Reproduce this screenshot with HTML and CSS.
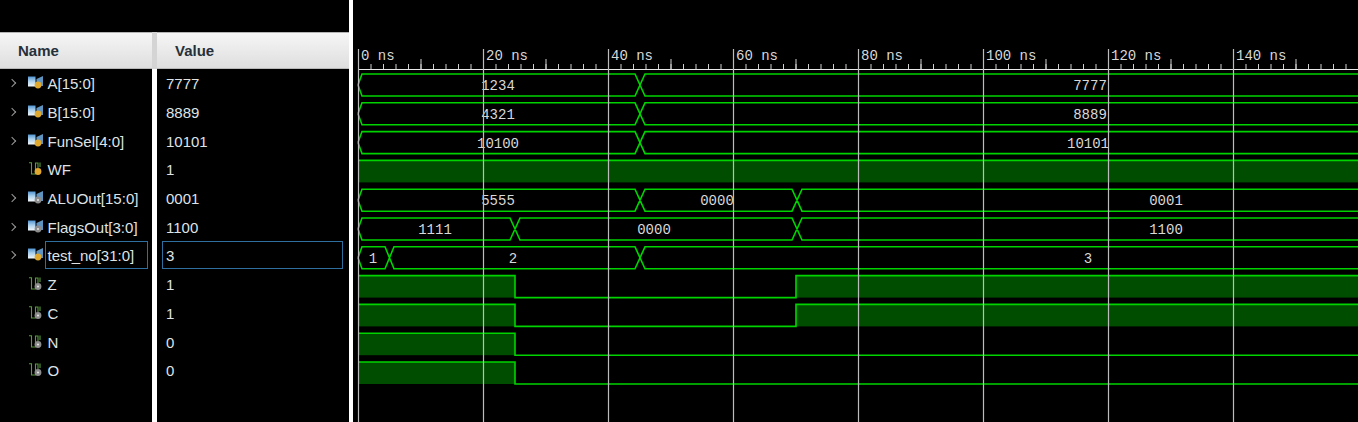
FILE: index.html
```html
<!DOCTYPE html>
<html lang="en">
<head>
  <meta charset="UTF-8">
  <title>Waveform viewer</title>
  <link rel="stylesheet" href="styles.css">
</head>
<body>

  <svg class="defs" width="0" height="0">
    <defs>
      <linearGradient id="bus-left" x1="0" y1="0" x2="0" y2="1">
        <stop offset="0" stop-color="#4f94d0"/>
        <stop offset="0.45" stop-color="#a9cfec"/>
        <stop offset="1" stop-color="#f2f7fb"/>
      </linearGradient>
      <g id="ico-bus">
        <rect x="0" y="0.5" width="7.5" height="10" fill="url(#bus-left)"/>
        <path d="M8.5 3 L15 0 V10 L8.5 10 Z" fill="#5f93c0"/>
      </g>
      <g id="ico-wire">
        <path d="M1 0.8 H3.5 V12 H7.5 V1 H10 V6 M12 0.5 V5" fill="none" stroke="#5a9a40" stroke-width="1.1"/>
      </g>
    </defs>
  </svg>

  <div class="viewer">

    <!-- Name column -->
    <div class="col col-name">
      <div class="col-head">Name</div>
      <div class="row"><span class="chev"></span><svg class="ico" viewBox="0 0 15 14"><use href="#ico-bus"/><circle class="in" cx="10" cy="9" r="3.4"/></svg><span class="cell">A[15:0]</span></div>
      <div class="row"><span class="chev"></span><svg class="ico" viewBox="0 0 15 14"><use href="#ico-bus"/><circle class="in" cx="10" cy="9" r="3.4"/></svg><span class="cell">B[15:0]</span></div>
      <div class="row"><span class="chev"></span><svg class="ico" viewBox="0 0 15 14"><use href="#ico-bus"/><circle class="in" cx="10" cy="9" r="3.4"/></svg><span class="cell">FunSel[4:0]</span></div>
      <div class="row"><span class="chev none"></span><svg class="ico" viewBox="0 0 15 14"><use href="#ico-wire"/><circle class="in" cx="10" cy="9.5" r="3.4"/></svg><span class="cell">WF</span></div>
      <div class="row"><span class="chev"></span><svg class="ico" viewBox="0 0 15 14"><use href="#ico-bus"/><circle class="out" cx="10" cy="9" r="3.4"/><circle class="dot" cx="10" cy="9" r="1"/></svg><span class="cell">ALUOut[15:0]</span></div>
      <div class="row"><span class="chev"></span><svg class="ico" viewBox="0 0 15 14"><use href="#ico-bus"/><circle class="out" cx="10" cy="9" r="3.4"/><circle class="dot" cx="10" cy="9" r="1"/></svg><span class="cell">FlagsOut[3:0]</span></div>
      <div class="row"><span class="chev"></span><svg class="ico" viewBox="0 0 15 14"><use href="#ico-bus"/><circle class="in" cx="10" cy="9" r="3.4"/></svg><span class="cell selected">test_no[31:0]</span></div>
      <div class="row"><span class="chev none"></span><svg class="ico" viewBox="0 0 15 14"><use href="#ico-wire"/><circle class="out" cx="10" cy="9.5" r="3.4"/><circle class="dot" cx="10" cy="9.5" r="1"/></svg><span class="cell">Z</span></div>
      <div class="row"><span class="chev none"></span><svg class="ico" viewBox="0 0 15 14"><use href="#ico-wire"/><circle class="out" cx="10" cy="9.5" r="3.4"/><circle class="dot" cx="10" cy="9.5" r="1"/></svg><span class="cell">C</span></div>
      <div class="row"><span class="chev none"></span><svg class="ico" viewBox="0 0 15 14"><use href="#ico-wire"/><circle class="out" cx="10" cy="9.5" r="3.4"/><circle class="dot" cx="10" cy="9.5" r="1"/></svg><span class="cell">N</span></div>
      <div class="row"><span class="chev none"></span><svg class="ico" viewBox="0 0 15 14"><use href="#ico-wire"/><circle class="out" cx="10" cy="9.5" r="3.4"/><circle class="dot" cx="10" cy="9.5" r="1"/></svg><span class="cell">O</span></div>
    </div>

    <div class="sash sash-inner"><div class="sash-head"></div></div>

    <!-- Value column -->
    <div class="col col-value">
      <div class="col-head">Value</div>
      <div class="row"><span class="cell">7777</span></div>
      <div class="row"><span class="cell">8889</span></div>
      <div class="row"><span class="cell">10101</span></div>
      <div class="row"><span class="cell">1</span></div>
      <div class="row"><span class="cell">0001</span></div>
      <div class="row"><span class="cell">1100</span></div>
      <div class="row"><span class="cell selected">3</span></div>
      <div class="row"><span class="cell">1</span></div>
      <div class="row"><span class="cell">1</span></div>
      <div class="row"><span class="cell">0</span></div>
      <div class="row"><span class="cell">0</span></div>
    </div>

    <div class="sash"></div>

    <!-- Waveform canvas, drawn in page coordinates -->
    <svg class="wave" viewBox="353 0 1005 422">
      <!-- time ruler -->
      <line class="axis" x1="358" y1="69.5" x2="1358" y2="69.5"/>
      <line class="tick-minor" x1="358" y1="66.5" x2="1358" y2="66.5"/>
      <line class="tick-major" x1="420.5" y1="64" x2="1358" y2="64"/>
      <text class="time" x="361" y="60">0 ns</text>
      <text class="time" x="486" y="60">20 ns</text>
      <text class="time" x="611" y="60">40 ns</text>
      <text class="time" x="736" y="60">60 ns</text>
      <text class="time" x="861" y="60">80 ns</text>
      <text class="time" x="986" y="60">100 ns</text>
      <text class="time" x="1111" y="60">120 ns</text>
      <text class="time" x="1236" y="60">140 ns</text>

      <!-- A -->
      <g transform="translate(0 74)">
        <path class="sig" d="M358 11 L362 0 H635 L645 22 H1358 M358 11 L362 22 H635 L645 0 H1358"/>
        <text class="val" x="498" y="16">1234</text>
        <text class="val" x="1090" y="16">7777</text>
      </g>
      <!-- B -->
      <g transform="translate(0 102.8)">
        <path class="sig" d="M358 11 L362 0 H635 L645 22 H1358 M358 11 L362 22 H635 L645 0 H1358"/>
        <text class="val" x="498" y="16">4321</text>
        <text class="val" x="1090" y="16">8889</text>
      </g>
      <!-- FunSel -->
      <g transform="translate(0 131.6)">
        <path class="sig" d="M358 11 L362 0 H635 L645 22 H1358 M358 11 L362 22 H635 L645 0 H1358"/>
        <text class="val" x="498" y="16">10100</text>
        <text class="val" x="1088" y="16">10101</text>
      </g>
      <!-- WF -->
      <g transform="translate(0 160.4)">
        <rect class="high" x="358" y="0" width="1000" height="22"/>
        <path class="sig" d="M358 0 H1358"/>
      </g>
      <!-- ALUOut -->
      <g transform="translate(0 189.2)">
        <path class="sig" d="M358 11 L362 0 H635 L645 22 H792 L802 0 H1358 M358 11 L362 22 H635 L645 0 H792 L802 22 H1358"/>
        <text class="val" x="498" y="16">5555</text>
        <text class="val" x="717" y="16">0000</text>
        <text class="val" x="1166" y="16">0001</text>
      </g>
      <!-- FlagsOut -->
      <g transform="translate(0 218)">
        <path class="sig" d="M358 11 L362 0 H510 L520 22 H792 L802 0 H1358 M358 11 L362 22 H510 L520 0 H792 L802 22 H1358"/>
        <text class="val" x="435" y="16">1111</text>
        <text class="val" x="654" y="16">0000</text>
        <text class="val" x="1166" y="16">1100</text>
      </g>
      <!-- test_no -->
      <g transform="translate(0 246.8)">
        <path class="sig" d="M358 11 L362 0 H385 L394 22 H635 L645 0 H1358 M358 11 L362 22 H385 L394 0 H635 L645 22 H1358"/>
        <text class="val" x="373" y="16">1</text>
        <text class="val" x="513" y="16">2</text>
        <text class="val" x="1088" y="16">3</text>
      </g>
      <!-- Z -->
      <g transform="translate(0 275.6)">
        <rect class="high" x="358" y="0" width="157" height="22"/>
        <rect class="high" x="796" y="0" width="562" height="22"/>
        <path class="sig" d="M358 0 H515 V22 H796 V0 H1358"/>
      </g>
      <!-- C -->
      <g transform="translate(0 304.4)">
        <rect class="high" x="358" y="0" width="157" height="22"/>
        <rect class="high" x="796" y="0" width="562" height="22"/>
        <path class="sig" d="M358 0 H515 V22 H796 V0 H1358"/>
      </g>
      <!-- N -->
      <g transform="translate(0 333.2)">
        <rect class="high" x="358" y="0" width="157" height="22"/>
        <path class="sig" d="M358 0 H515 V22 H1358"/>
      </g>
      <!-- O -->
      <g transform="translate(0 362)">
        <rect class="high" x="358" y="0" width="157" height="22"/>
        <path class="sig" d="M358 0 H515 V22 H1358"/>
      </g>

      <!-- grid over the traces -->
      <line class="grid" x1="358.5" y1="49" x2="358.5" y2="422"/>
      <line class="grid" x1="483.5" y1="49" x2="483.5" y2="422"/>
      <line class="grid" x1="608.5" y1="49" x2="608.5" y2="422"/>
      <line class="grid" x1="733.5" y1="49" x2="733.5" y2="422"/>
      <line class="grid" x1="858.5" y1="49" x2="858.5" y2="422"/>
      <line class="grid" x1="983.5" y1="49" x2="983.5" y2="422"/>
      <line class="grid" x1="1108.5" y1="49" x2="1108.5" y2="422"/>
      <line class="grid" x1="1233.5" y1="49" x2="1233.5" y2="422"/>
    </svg>

  </div>

</body>
</html>
```

FILE: styles.css
```css
html, body {
  margin: 0;
  height: 100%;
  background: #000;
  overflow: hidden;
}

.defs {
  position: absolute;
}

.viewer {
  display: flex;
  height: 422px;
  font-family: "Liberation Sans", Arial, sans-serif;
  font-size: 15px;
  color: #dfe3e6;
}

.col {
  display: flex;
  flex-direction: column;
  flex: none;
  padding-top: 32px;
  box-sizing: border-box;
}

.col-name { width: 152px; }
.col-value { width: 192px; }

.col-head {
  flex: none;
  height: 37px;
  box-sizing: border-box;
  border-top: 1px solid #b4b4b4;
  border-bottom: 1px solid #b8b8b8;
  background: linear-gradient(#f6f6f6, #dedede);
  color: #26303a;
  font-weight: bold;
  font-size: 15px;
  line-height: 35px;
  padding-left: 18px;
}

.row {
  flex: none;
  display: flex;
  align-items: center;
  height: 28.7px;
}

.col-value .row { padding: 0 6px 0 5px; }

.chev {
  flex: none;
  width: 5px;
  height: 5px;
  margin: 0 0 0 9px;
  border-top: 1.5px solid #9a9a9a;
  border-right: 1.5px solid #9a9a9a;
  transform: rotate(45deg);
}

.chev.none {
  visibility: hidden;
}

.ico {
  flex: none;
  width: 15px;
  height: 14px;
  margin-left: 12.5px;
  margin-right: 2px;
}

.ico .in { fill: #e0a92e; }
.ico .out { fill: #8c8c8c; }
.ico .dot { fill: #e8e8e8; }

.cell {
  flex: 1;
  min-width: 0;
  height: 28px;
  line-height: 27px;
  box-sizing: border-box;
  padding: 0 2px;
  border: 1px solid transparent;
  white-space: nowrap;
}

.col-value .cell { padding-left: 3px; }
.col-name .cell { margin-right: 4px; }

.cell.selected {
  border-color: #2f6f9f;
}

.sash {
  flex: none;
  width: 4px;
  background: #fff;
}

.sash-inner {
  width: 5px;
  margin-top: 32px;
}

.sash-head {
  height: 37px;
  background: #d4d4d4;
}

.wave {
  flex: 1;
  min-width: 0;
  height: 422px;
}

.axis {
  stroke: #e8e8e8;
  stroke-width: 1;
}

.tick-minor {
  stroke: #d0d0d0;
  stroke-width: 5;
  stroke-dasharray: 1 11.5;
}

.tick-major {
  stroke: #d0d0d0;
  stroke-width: 10;
  stroke-dasharray: 1 124;
}

.grid {
  stroke: #bcbcbc;
  stroke-width: 1.2;
}

.sig {
  fill: none;
  stroke: #00d400;
  stroke-width: 1.6;
}

.high {
  fill: #004d00;
}

.time,
.val {
  font-family: "Liberation Mono", "DejaVu Sans Mono", monospace;
  font-size: 14px;
  fill: #d8d8d8;
}

.val {
  text-anchor: middle;
}
```
